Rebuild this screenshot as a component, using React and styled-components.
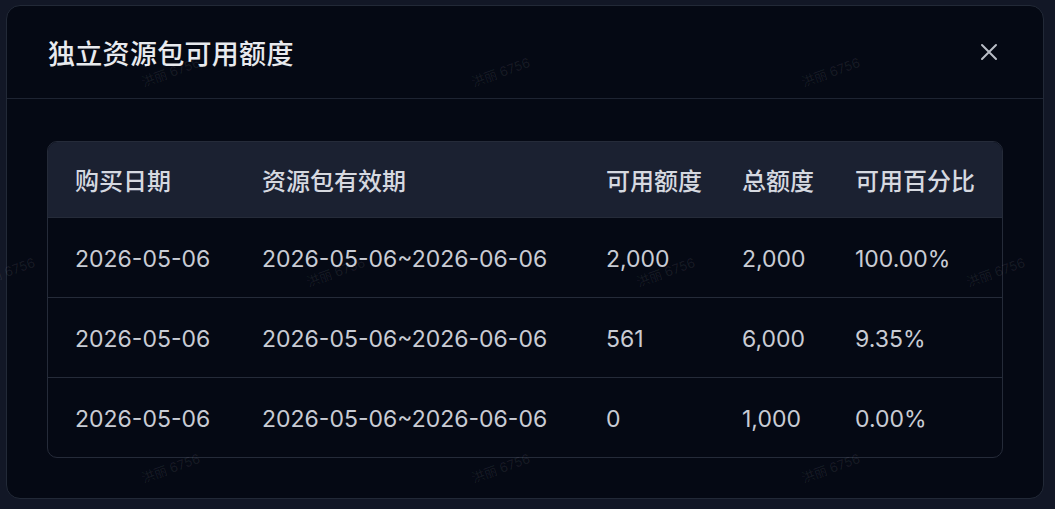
import styled, { createGlobalStyle } from 'styled-components';

const Global = createGlobalStyle`
  html, body {
    margin: 0;
    padding: 0;
    background: #121726;
  }
  body {
    font-family: "Inter", "Noto Sans CJK SC", sans-serif;
    color: #d3d6dd;
  }
`;

const Page = styled.div`
  width: 1055px;
  height: 509px;
  padding: 5px 11px 10px 6px;
  box-sizing: border-box;
  position: relative;
  overflow: hidden;
`;

const Modal = styled.div`
  height: 100%;
  box-sizing: border-box;
  background: #050914;
  border: 1px solid #222937;
  border-radius: 14px;
  display: flex;
  flex-direction: column;
`;

const Header = styled.div`
  height: 92px;
  padding: 0 45px 0 41px;
  display: flex;
  align-items: center;
  justify-content: space-between;
  border-bottom: 1px solid #1e2432;
`;

const Title = styled.h2`
  margin: 0;
  font-family: "Noto Sans CJK SC", sans-serif;
  font-size: 27px;
  font-weight: 500;
  color: #e8eaee;
  letter-spacing: 0.3px;
`;

const Close = styled.button`
  border: 0;
  background: none;
  padding: 0;
  width: 18px;
  height: 18px;
  display: flex;
  color: #b9bdc6;
  cursor: pointer;
`;

const Body = styled.div`
  padding: 42px 40px 40px 40px;
`;

const Table = styled.div`
  border: 1px solid #252b39;
  border-radius: 10px;
  overflow: hidden;
`;

const Row = styled.div`
  display: grid;
  grid-template-columns: 187px 344px 136px 113px 1fr;
  height: ${p => (p.$head ? '75px' : '80px')};
  align-items: center;
  background: ${p => (p.$head ? '#1b2131' : 'transparent')};
  border-top: ${p => (p.$head ? 'none' : '1px solid #252b39')};
  box-sizing: border-box;
`;

const Cell = styled.div`
  padding-left: 27px;
  padding-top: ${p => (p.$head ? '0' : '3px')};
  font-size: ${p => (p.$head ? '24px' : '23px')};
  font-family: ${p => (p.$head ? '"Noto Sans CJK SC", sans-serif' : '"Inter", "Noto Sans CJK SC", sans-serif')};
  font-weight: ${p => (p.$head ? 500 : 400)};
  color: ${p => (p.$head ? '#d6d9e0' : '#c9ccd4')};
  white-space: nowrap;
  word-spacing: 0;
`;

const Mark = styled.span`
  position: absolute;
  font-size: 13px;
  color: rgba(255, 255, 255, 0.08);
  transform: rotate(-20deg);
  pointer-events: none;
  white-space: nowrap;
  font-family: "Inter", "Noto Sans CJK SC", sans-serif;
`;

const columns = ['购买日期', '资源包有效期', '可用额度', '总额度', '可用百分比'];

const rows = [
  ['2026-05-06', '2026-05-06~2026-06-06', '2,000', '2,000', '100.00%'],
  ['2026-05-06', '2026-05-06~2026-06-06', '561', '6,000', '9.35%'],
  ['2026-05-06', '2026-05-06~2026-06-06', '0', '1,000', '0.00%'],
];

const marks = [
  [140, 62], [470, 62], [800, 62],
  [-25, 262], [305, 262], [635, 262], [965, 262],
  [140, 458], [470, 458], [800, 458],
];

export default function App() {
  return (
    <Page>
      <Global />
      <Modal>
        <Header>
          <Title>独立资源包可用额度</Title>
          <Close aria-label="close">
            <svg width="18" height="18" viewBox="0 0 18 18" fill="none" stroke="currentColor" strokeWidth="2" strokeLinecap="round">
              <path d="M2 2 L16 16 M16 2 L2 16" />
            </svg>
          </Close>
        </Header>
        <Body>
          <Table>
            <Row $head>
              {columns.map(c => (
                <Cell $head key={c}>{c}</Cell>
              ))}
            </Row>
            {rows.map((r, i) => (
              <Row key={i}>
                {r.map((v, j) => (
                  <Cell key={j}>{v}</Cell>
                ))}
              </Row>
            ))}
          </Table>
        </Body>
      </Modal>
      {marks.map(([x, y], i) => (
        <Mark key={i} style={{ left: x, top: y }}>洪丽 6756</Mark>
      ))}
    </Page>
  );
}
